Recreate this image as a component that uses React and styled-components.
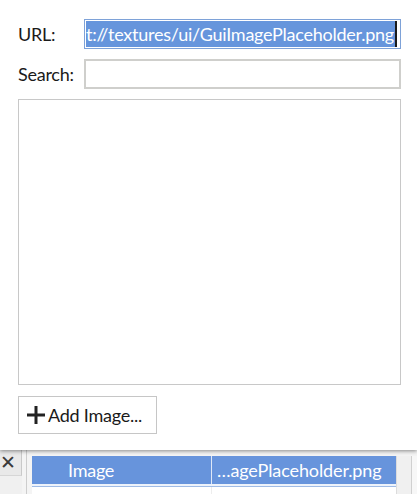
import React from "react";
import styled, { createGlobalStyle } from "styled-components";

const Global = createGlobalStyle`
  html, body { margin: 0; padding: 0; }
  body {
    background: #f0f0f0;
    font-family: "Lato", "Noto Sans", sans-serif;
    overflow: hidden;
  }
`;

const Page = styled.div`
  width: 417px;
  height: 494px;
  display: flex;
  flex-direction: column;
  overflow: hidden;
  position: relative;
`;

const Popup = styled.div`
  position: relative;
  z-index: 2;
  height: 450px;
  box-sizing: border-box;
  background: #ffffff;
  padding: 19px 16px 16px 18px;
  display: flex;
  flex-direction: column;
  box-shadow: 0 1px 4px rgba(0, 0, 0, 0.45);
`;

const FieldRow = styled.div`
  display: grid;
  grid-template-columns: 66px 1fr;
  align-items: center;
  height: 30px;
  margin-bottom: ${(p) => p.$gap || 0}px;
`;

const Label = styled.span`
  font-size: 18px;
  color: #1a1a1a;
  letter-spacing: -0.25px;
`;

const Input = styled.div`
  height: 30px;
  box-sizing: border-box;
  border: ${(p) => (p.$focused ? "1px solid #7ea2d8" : "2px solid #cfcfcc")};
  background: #fff;
  display: flex;
  align-items: center;
  padding-left: ${(p) => (p.$focused ? 1 : 2)}px;
  overflow: hidden;
  white-space: nowrap;
`;

const Selected = styled.span`
  background: #6695dc;
  color: #fff;
  font-size: 18px;
  letter-spacing: -0.25px;
  line-height: 26px;
  height: 26px;
  padding-right: 1px;
  border-right: 2px solid #1b1b1b;
`;

const ListBox = styled.div`
  margin-top: 10px;
  height: 286px;
  box-sizing: border-box;
  border: 1px solid #c8c8c8;
  background: #fff;
`;

const Button = styled.button`
  margin-top: 11px;
  width: 139px;
  height: 38px;
  box-sizing: border-box;
  border: 1px solid #c6c6c6;
  background: #fff;
  display: flex;
  align-items: center;
  gap: 3px;
  padding: 0 0 0 8px;
  font-family: "Lato", "Noto Sans", sans-serif;
  font-size: 18px;
  letter-spacing: -0.25px;
  color: #1a1a1a;
`;

const Behind = styled.div`
  flex: 1;
  display: flex;
  background: #f0f0f0;
`;

const CloseTab = styled.div`
  width: 22px;
  height: 26px;
  box-sizing: border-box;
  background: #e9e9e9;
  border-right: 1px solid #c9c9c9;
  border-bottom: 1px solid #d6d6d6;
  display: flex;
  align-items: center;
  justify-content: flex-start;
  font-family: "DejaVu Sans", sans-serif;
  font-size: 19px;
  line-height: 1;
  color: #3a3a3a;
  padding-left: 0;
  overflow: hidden;
`;

const Gutter = styled.div`
  width: 4px;
  border-right: 1px solid #cdcdcd;
  background: #f4f4f4;
`;

const TableArea = styled.div`
  flex: 1;
  display: flex;
  background: #f4f4f4;
  padding-top: 6px;
  padding-left: 5px;
`;

const Table = styled.div`
  width: 364px;
  display: flex;
  flex-direction: column;
  background: #fff;
`;

const HeaderRow = styled.div`
  display: grid;
  grid-template-columns: 179px 1fr;
  height: 28px;
  background: #6794dc;
  border-bottom: 2px solid #eef3fb;
`;

const Cell = styled.div`
  display: flex;
  align-items: center;
  color: #fff;
  font-size: 18px;
  letter-spacing: ${(p) => (p.$tight ? "-0.1px" : "-0.25px")};
  padding-left: ${(p) => p.$pl || 0}px;
  border-left: ${(p) => (p.$divider ? "1px solid #dfe8f7" : "none")};
  white-space: nowrap;
  overflow: hidden;
`;

const BodyRow = styled.div`
  display: grid;
  grid-template-columns: 179px 1fr;
  flex: 1;
  border-top: 1px solid #9fbbe6;
`;

const BodyCell = styled.div`
  border-left: ${(p) => (p.$divider ? "1px solid #ededed" : "none")};
`;

const RightScroll = styled.div`
  width: 14px;
  border-left: 1px solid #dcdcdc;
  border-right: 1px solid #d0d0d0;
  background: #f0f0f0;
`;

const RightEdge = styled.div`
  flex: 1;
  background: #f7f7f7;
`;

const PlusIcon = () => (
  <svg width="18" height="18" viewBox="0 0 18 18">
    <rect x="0" y="7.5" width="18" height="3" fill="#222" />
    <rect x="7.5" y="0" width="3" height="18" fill="#222" />
  </svg>
);

export default function App() {
  return (
    <>
      <Global />
      <Page>
        <Popup>
          <FieldRow $gap={10}>
            <Label>URL:</Label>
            <Input $focused>
              <Selected>t://textures/ui/GuiImagePlaceholder.png</Selected>
            </Input>
          </FieldRow>
          <FieldRow>
            <Label>Search:</Label>
            <Input />
          </FieldRow>
          <ListBox />
          <Button>
            <PlusIcon />
            Add Image...
          </Button>
        </Popup>
        <Behind>
          <CloseTab>✕</CloseTab>
          <Gutter />
          <TableArea>
            <Table>
              <HeaderRow>
                <Cell $pl={36}>Image</Cell>
                <Cell $pl={5} $tight $divider>…agePlaceholder.png</Cell>
              </HeaderRow>
              <BodyRow>
                <BodyCell />
                <BodyCell $divider />
              </BodyRow>
            </Table>
            <RightScroll />
            <RightEdge />
          </TableArea>
        </Behind>
      </Page>
    </>
  );
}
